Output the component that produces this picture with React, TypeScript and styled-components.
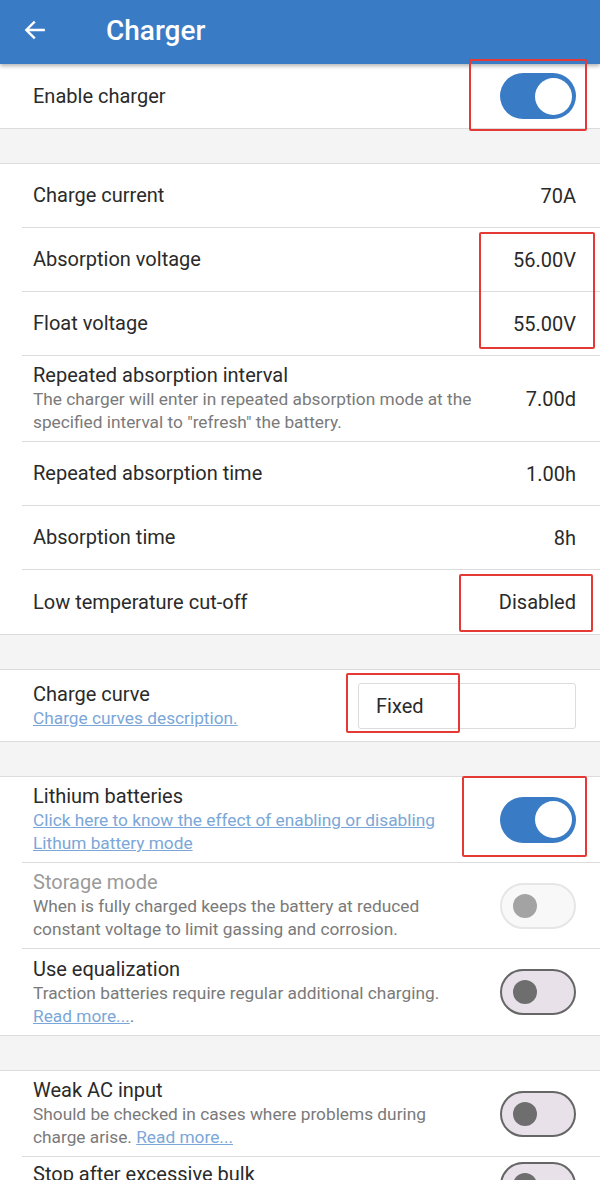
import styled, { createGlobalStyle } from "styled-components";

const GlobalStyle = createGlobalStyle`
  html, body {
    margin: 0;
    padding: 0;
    background: #f4f4f4;
  }
  body {
    font-family: Roboto, "Noto Sans", "Liberation Sans", sans-serif;
    color: #2a2a2a;
  }
`;

const Toggle = ({ state }: { state: "on" | "off" | "disabled" }) => (
  <Track $state={state}>
    <Thumb $state={state} />
  </Track>
);

const ValueRow = ({ label, value }: { label: string; value: string }) => (
  <Row>
    <Label>{label}</Label>
    <Value>{value}</Value>
  </Row>
);

const App = () => {
  return (
    <Page>
      <GlobalStyle />
      <Header>
        <BackArrow viewBox="0 0 24 24">
          <path d="M20 12H5M11 5l-7 7 7 7" />
        </BackArrow>
        <Title>Charger</Title>
      </Header>

      <Section>
        <Row $last>
          <Label>Enable charger</Label>
          <Toggle state="on" />
        </Row>
      </Section>
      <Gap />

      <Section>
        <ValueRow label="Charge current" value="70A" />
        <ValueRow label="Absorption voltage" value="56.00V" />
        <ValueRow label="Float voltage" value="55.00V" />
        <Row $tall>
          <TextCol>
            <Label>Repeated absorption interval</Label>
            <Desc>
              The charger will enter in repeated absorption mode at the
              <br />
              specified interval to "refresh" the battery.
            </Desc>
          </TextCol>
          <Value>7.00d</Value>
        </Row>
        <ValueRow label="Repeated absorption time" value="1.00h" />
        <ValueRow label="Absorption time" value="8h" />
        <Row $last>
          <Label>Low temperature cut-off</Label>
          <Value>Disabled</Value>
        </Row>
      </Section>
      <Gap />

      <Section>
        <Row $last $curve>
          <TextCol>
            <Label>Charge curve</Label>
            <LinkText>Charge curves description.</LinkText>
          </TextCol>
          <SelectBox>Fixed</SelectBox>
        </Row>
      </Section>
      <Gap />

      <Section>
        <Row $tall>
          <TextCol>
            <Label>Lithium batteries</Label>
            <LinkText>
              Click here to know the effect of enabling or disabling
              <br />
              Lithum battery mode
            </LinkText>
          </TextCol>
          <Toggle state="on" />
        </Row>
        <Row $tall>
          <TextCol>
            <Label $muted>Storage mode</Label>
            <Desc>
              When is fully charged keeps the battery at reduced
              <br />
              constant voltage to limit gassing and corrosion.
            </Desc>
          </TextCol>
          <Toggle state="disabled" />
        </Row>
        <Row $tall $last>
          <TextCol>
            <Label>Use equalization</Label>
            <Desc>
              Traction batteries require regular additional charging.
              <br />
              <InlineLink>Read more...</InlineLink>.
            </Desc>
          </TextCol>
          <Toggle state="off" />
        </Row>
      </Section>
      <Gap />

      <Section>
        <Row $tall>
          <TextCol>
            <Label>Weak AC input</Label>
            <Desc>
              Should be checked in cases where problems during
              <br />
              charge arise. <InlineLink>Read more...</InlineLink>
            </Desc>
          </TextCol>
          <Toggle state="off" />
        </Row>
        <Row $tall $top>
          <Label>Stop after excessive bulk</Label>
          <Toggle state="off" />
        </Row>
      </Section>

      {/* annotation marks */}
      <Mark $x={469} $y={59} $w={118} $h={72} />
      <Mark $x={479} $y={232} $w={116} $h={117} />
      <Mark $x={459} $y={574} $w={134} $h={58} />
      <Mark $x={346} $y={673} $w={114} $h={60} />
      <Mark $x={462} $y={776} $w={125} $h={81} />
    </Page>
  );
};

const Page = styled.div`
  position: relative;
  width: 600px;
  height: 1180px;
  overflow: hidden;
  background: #f4f4f4;
`;

const Header = styled.div`
  height: 64px;
  background: #3a7bc6;
  display: flex;
  align-items: center;
  padding-left: 22px;
  padding-bottom: 4px;
  box-sizing: border-box;
  box-shadow: 0 2px 4px rgba(0, 0, 0, 0.3);
  position: relative;
  z-index: 1;
`;

const BackArrow = styled.svg`
  width: 26px;
  height: 26px;
  fill: none;
  stroke: #fff;
  stroke-width: 2.2;
  stroke-linecap: square;
`;

const Title = styled.div`
  margin-left: 58px;
  color: #fff;
  font-size: 28px;
  font-weight: 500;
`;

const Section = styled.div`
  background: #fff;
  border-bottom: 1.5px solid #dcdcdc;
`;

const Gap = styled.div`
  height: 35px;
  box-sizing: border-box;
  background: #f4f4f4;
  border-bottom: 1.5px solid #dcdcdc;
`;

const Row = styled.div<{
  $tall?: boolean;
  $last?: boolean;
  $curve?: boolean;
  $top?: boolean;
}>`
  display: flex;
  align-items: ${(p) => (p.$top ? "flex-start" : "center")};
  justify-content: space-between;
  margin-left: 22px;
  padding: ${(p) => (p.$top ? "5px" : "0")} 24px 0 11px;
  height: ${(p) => (p.$curve ? 71 : p.$tall ? 86 : 64)}px;
  box-sizing: border-box;
  border-bottom: ${(p) => (p.$last ? "none" : "1.5px solid #dcdcdc")};
`;

const TextCol = styled.div`
  display: flex;
  flex-direction: column;
`;

const Label = styled.div<{ $muted?: boolean }>`
  font-size: 20px;
  line-height: 25px;
  color: ${(p) => (p.$muted ? "#9a9a9a" : "#2a2a2a")};
`;

const Value = styled.div`
  font-size: 20px;
  color: #2a2a2a;
`;

const Desc = styled.div`
  font-size: 17.3px;
  line-height: 23px;
  color: #7a7a7a;
`;

const LinkText = styled.div`
  font-size: 17.3px;
  line-height: 23px;
  color: #7ba7d8;
  text-decoration: underline;
`;

const InlineLink = styled.span`
  color: #7ba7d8;
  text-decoration: underline;
`;

const SelectBox = styled.div`
  width: 218px;
  height: 46px;
  box-sizing: border-box;
  border: 1.5px solid #dcdcdc;
  border-radius: 3px;
  display: flex;
  align-items: center;
  padding-left: 17px;
  font-size: 20px;
`;

const Track = styled.div<{ $state: "on" | "off" | "disabled" }>`
  width: 76px;
  height: 46px;
  box-sizing: border-box;
  border-radius: 23px;
  display: flex;
  align-items: center;
  flex-shrink: 0;
  justify-content: ${(p) => (p.$state === "on" ? "flex-end" : "flex-start")};
  padding: 0 ${(p) => (p.$state === "on" ? 4 : 11)}px;
  background: ${(p) =>
    p.$state === "on" ? "#3a7bc6" : p.$state === "off" ? "#e8e1ea" : "#f8f8f8"};
  border: ${(p) =>
    p.$state === "on"
      ? "none"
      : p.$state === "off"
        ? "2.5px solid #666"
        : "2px solid #e6e6e6"};
`;

const Thumb = styled.div<{ $state: "on" | "off" | "disabled" }>`
  width: ${(p) => (p.$state === "on" ? 37 : 24)}px;
  height: ${(p) => (p.$state === "on" ? 37 : 24)}px;
  border-radius: 50%;
  background: ${(p) =>
    p.$state === "on" ? "#fff" : p.$state === "off" ? "#6e6e6e" : "#a3a3a3"};
`;

const Mark = styled.div<{ $x: number; $y: number; $w: number; $h: number }>`
  position: absolute;
  left: ${(p) => p.$x}px;
  top: ${(p) => p.$y}px;
  width: ${(p) => p.$w}px;
  height: ${(p) => p.$h}px;
  box-sizing: border-box;
  border: 2px solid #e53935;
  border-radius: 2px;
  z-index: 2;
`;

export default App;
